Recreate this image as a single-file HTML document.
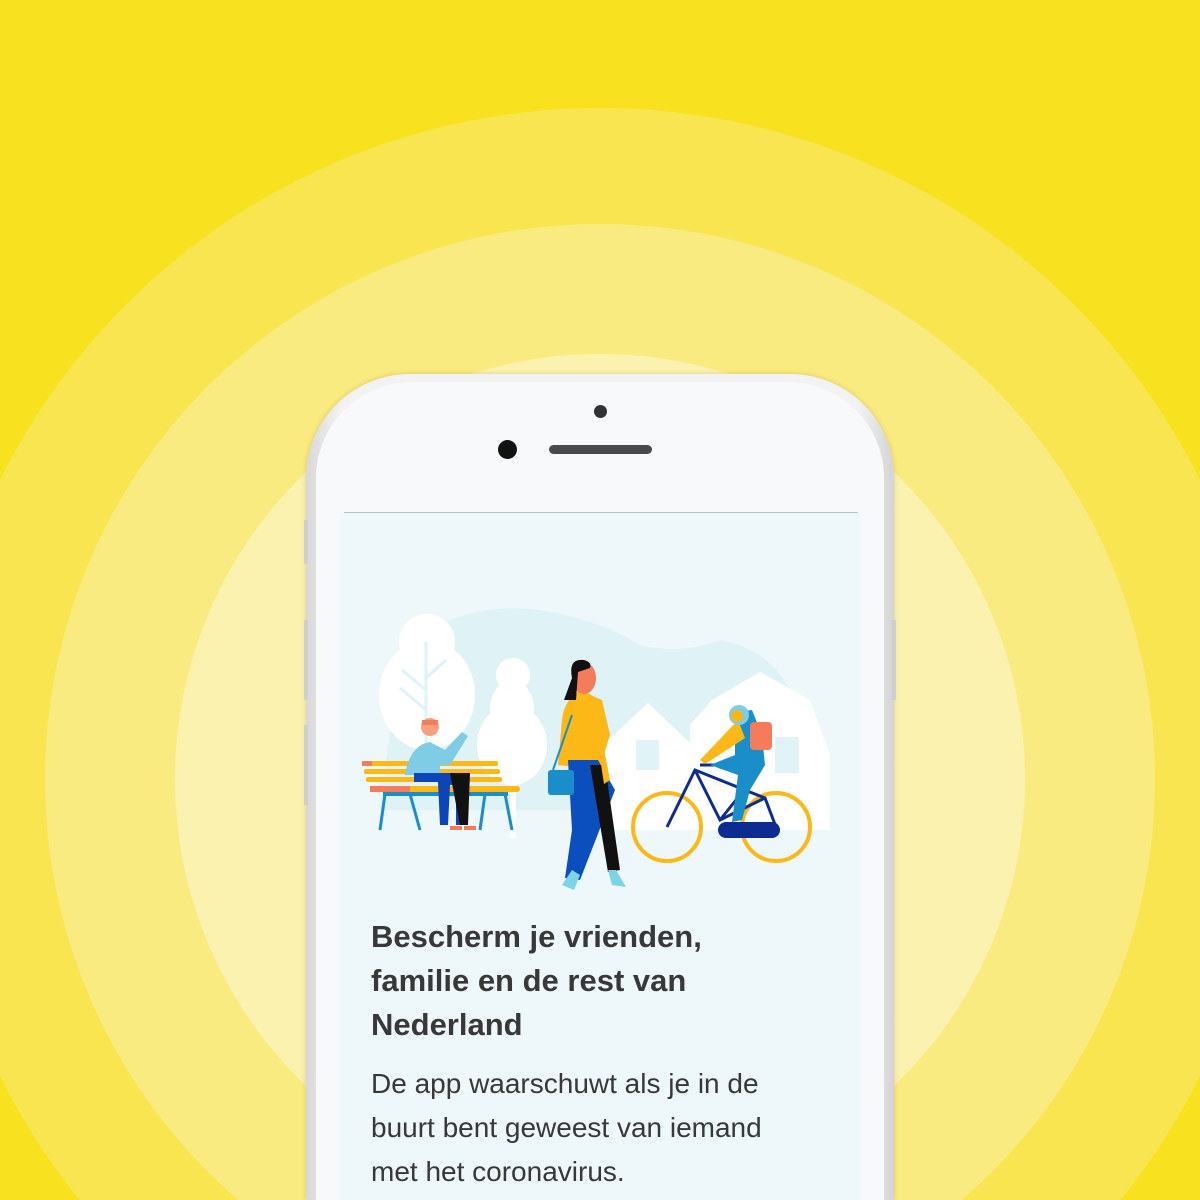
<!DOCTYPE html>
<html><head><meta charset="utf-8"><style>
html,body{margin:0;padding:0;width:1200px;height:1200px;overflow:hidden;background:#f8e11f;font-family:"Liberation Sans","DejaVu Sans",sans-serif}
#w{position:relative;width:1200px;height:1200px;overflow:hidden}
</style></head><body><div id="w">
<svg style="position:absolute;left:0;top:0" width="1200" height="1200">
<circle cx="600" cy="778" r="670" fill="#f9e54f"/>
<circle cx="600" cy="779" r="555" fill="#faeb80"/>
<circle cx="600" cy="779" r="425" fill="#fcf2b0"/>
</svg>
<div style="position:absolute;left:306px;top:374px;width:588px;height:826px;border-radius:104px 104px 0 0;background:linear-gradient(90deg,#d8d8d8,#f2f2f2 6%,#f2f2f2 94%,#d4d4d4);box-shadow:0 0 6px rgba(0,0,0,.15)"></div>
<div style="position:absolute;left:316px;top:382px;width:568px;height:818px;border-radius:96px 96px 0 0;background:#f8f9fb"></div>
<div style="position:absolute;left:304px;top:520px;width:4px;height:44px;background:#cfcfcf"></div>
<div style="position:absolute;left:304px;top:620px;width:4px;height:80px;background:#cfcfcf"></div>
<div style="position:absolute;left:304px;top:725px;width:4px;height:80px;background:#cfcfcf"></div>
<div style="position:absolute;left:892px;top:620px;width:4px;height:80px;background:#cfcfcf"></div>
<div style="position:absolute;left:594px;top:405px;width:13px;height:13px;border-radius:50%;background:#333"></div>
<div style="position:absolute;left:498px;top:440px;width:19px;height:19px;border-radius:50%;background:#111"></div>
<div style="position:absolute;left:549px;top:445px;width:103px;height:9px;border-radius:5px;background:#4a4a4a"></div>
<div style="position:absolute;left:344px;top:512px;width:514px;height:1px;background:#b9c3c4"></div>
<div style="position:absolute;left:340px;top:513px;width:520px;height:687px;background:#eef7f9"></div>
<svg style="position:absolute;left:340px;top:560px" width="520" height="340" viewBox="0 0 520 340">
<path d="M60 90 Q120 40 200 50 Q260 60 300 85 Q340 95 380 80 Q430 90 450 130 L470 250 L40 250 Z" fill="#dff3f6"/>
<ellipse cx="87" cy="135" rx="48" ry="55" fill="#fff"/><circle cx="87" cy="82" r="28" fill="#fff"/>
<path d="M86 82 V230 M86 130 L62 110 M86 118 L106 100 M86 150 L60 128" stroke="#dff3f6" stroke-width="3"/>
<ellipse cx="172" cy="185" rx="35" ry="40" fill="#fff"/><ellipse cx="172" cy="150" rx="22" ry="30" fill="#fff"/><circle cx="173" cy="115" r="17" fill="#fff"/><rect x="170" y="210" width="6" height="68" fill="#fff"/>
<path d="M263 185 L308 143 L350 183 L350 270 L263 270 Z" fill="#fff"/>
<path d="M350 165 L372 140 L420 112 L470 140 L490 195 L490 270 L350 270 Z" fill="#fff"/>
<rect x="296" y="180" width="23" height="30" fill="#e0f3f6"/><rect x="435" y="177" width="24" height="36" fill="#e0f3f6"/>
<rect x="22" y="201" width="136" height="5" rx="2" fill="#fbb816"/><rect x="24" y="209" width="136" height="5" rx="2" fill="#fbb816"/><rect x="26" y="217" width="136" height="5" rx="2" fill="#fbb816"/><rect x="30" y="226" width="150" height="6" rx="3" fill="#fbb816"/>
<rect x="22" y="201" width="10" height="5" fill="#f47c5a"/><rect x="30" y="226" width="40" height="6" fill="#f47c5a"/>
<path d="M45 234 L40 270 M70 234 L80 270 M145 234 L140 270 M165 234 L172 270" stroke="#1a8ec9" stroke-width="3"/>
<rect x="43" y="232" width="125" height="4" fill="#1a8ec9"/>
<path d="M65 215 Q70 185 90 182 L105 190 L122 172 L128 176 L110 205 L100 205 L100 215 Z" fill="#7fcce6"/>
<circle cx="90" cy="167" r="9" fill="#f6a07d"/><path d="M82 160 h16 v5 h-16z" fill="#f47c5a"/>
<path d="M74 213 H128 L124 265 L116 265 L116 225 L110 225 L108 265 L100 265 L98 222 H74 Z" fill="#0b45b8"/><path d="M110 213 H130 L128 265 L120 265 Z" fill="#111"/>
<rect x="110" y="266" width="12" height="4" fill="#f47c5a"/><rect x="124" y="266" width="12" height="4" fill="#f47c5a"/>
<path d="M244 128 Q248 135 262 140 L270 175 Q262 200 260 210 L218 205 L222 160 Q224 138 244 128Z" fill="#fbb816"/>
<path d="M228 200 L258 200 L275 230 L240 320 L225 318 L232 270 Z" fill="#0b4fbf"/><path d="M250 205 L265 205 L280 310 L268 312 Z" fill="#111"/>
<path d="M232 310 L222 325 L234 330 L240 315 Z M268 310 L272 325 L286 327 L276 310 Z" fill="#7dd4e6"/>
<ellipse cx="244" cy="118" rx="12" ry="16" fill="#f47c5a"/><path d="M232 118 Q228 98 244 100 Q252 102 250 108 L238 112 L236 140 L224 140 Z" fill="#111"/>
<path d="M258 158 L270 220 L264 224 L255 165Z" fill="#fbb816"/>
<rect x="208" y="210" width="26" height="25" rx="3" fill="#1a8ec9"/><path d="M213 210 L232 155" stroke="#1a8ec9" stroke-width="2"/>
<circle cx="327" cy="267" r="34" fill="none" stroke="#fbb816" stroke-width="4"/><circle cx="436" cy="267" r="34" fill="none" stroke="#fbb816" stroke-width="4"/>
<path d="M327 267 L355 210 L425 238 L436 267 M355 210 L380 260 L425 238 M380 260 L408 225 M397 205 L360 205" stroke="#0d2c91" stroke-width="3" fill="none"/>
<rect x="378" y="262" width="62" height="16" rx="8" fill="#0d2c91"/>
<path d="M395 170 Q400 150 412 150 L422 175 L425 205 L410 230 L402 260 L392 262 L398 215 L370 205 L395 195 Z" fill="#1a8ec9"/>
<path d="M398 160 L360 200 L365 204 L405 178 Z" fill="#fbb816"/>
<rect x="410" y="162" width="22" height="28" rx="4" fill="#f47c5a"/>
<circle cx="399" cy="155" r="10" fill="#7fcce6"/><circle cx="397" cy="156" r="6" fill="#fbb816"/>
</svg>
<div style="position:absolute;left:371px;top:915px;font-size:31px;line-height:44px;font-weight:bold;color:#383838;width:360px">Bescherm je vrienden, familie en de rest van Nederland</div>
<div style="position:absolute;left:371px;top:1062px;font-size:28px;line-height:44px;color:#383838;width:430px">De app waarschuwt als je in de buurt bent geweest van iemand met het coronavirus.</div>
</div></body></html>
